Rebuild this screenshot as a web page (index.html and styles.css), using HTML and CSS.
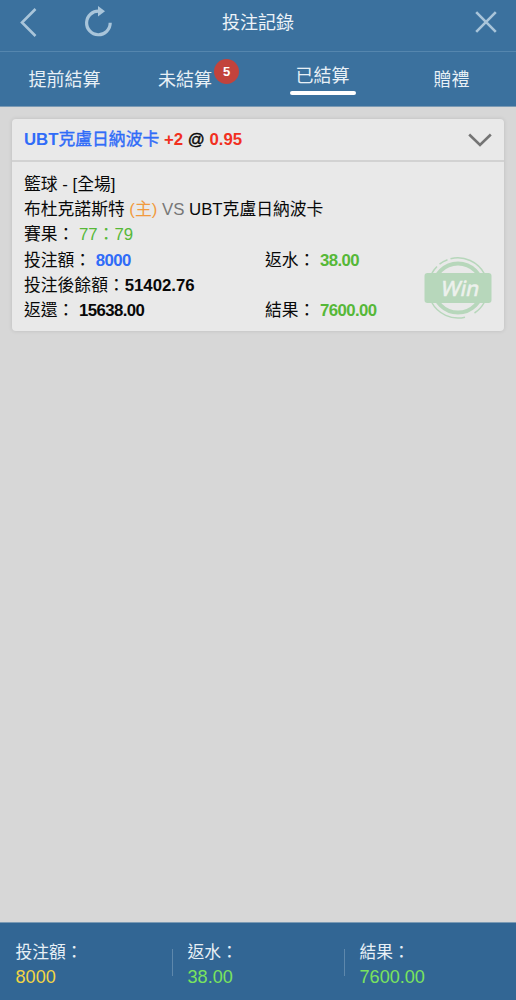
FILE: index.html
```
<!DOCTYPE html>
<html lang="zh-Hant">
<head>
    <meta charset="UTF-8">
    <meta name="viewport" content="width=device-width, initial-scale=1.0">
    <title>投注記錄</title>
    <link rel="stylesheet" href="styles.css">
</head>
<body>
    <header class="header">
        <svg class="icon-back" width="17" height="29" viewBox="0 0 17 29">
            <path d="M15.5 1 L2 14.5 L15.5 28"/>
        </svg>
        <svg class="icon-refresh" width="28" height="31" viewBox="0 0 28 31">
            <path class="ring" d="M15.5 5.2 A11.8 11.8 0 1 0 26.2 16.8"/>
            <path class="arrow" d="M14 0 L21 5.2 L14 10.4 Z"/>
        </svg>
        <h1>投注記錄</h1>
        <svg class="icon-close" width="22" height="22" viewBox="0 0 22 22">
            <path d="M1.2 1.2 L20.8 20.8 M20.8 1.2 L1.2 20.8"/>
        </svg>
    </header>

    <nav class="tabs">
        <a class="tab">提前結算</a>
        <a class="tab"><span class="tab-label">未結算<span class="badge">5</span></span></a>
        <a class="tab active">已結算</a>
        <a class="tab">贈禮</a>
    </nav>

    <main class="list">
        <div class="card">
            <div class="card-title">
                <div><span class="blue">UBT<span class="medium">克盧日納波卡</span></span> <span class="red">+2</span> <span class="medium">@</span> <span class="red">0.95</span></div>
                <svg class="icon-down" width="24" height="14" viewBox="0 0 24 14">
                    <path d="M1.2 1.5 L12 12 L22.8 1.5"/>
                </svg>
            </div>
            <div class="card-body">
                <div class="row">籃球 - [全場]</div>
                <div class="row">布杜克諾斯特 <span class="home">(主)</span> <span class="vs">VS</span> UBT克盧日納波卡</div>
                <div class="row">賽果： <span class="score">77：79</span></div>
                <div class="row cols">
                    <div>投注額： <b class="blue">8000</b></div>
                    <div>返水： <b class="green">38.00</b></div>
                </div>
                <div class="row">投注後餘額：<b class="balance">51402.76</b></div>
                <div class="row cols">
                    <div>返還： <b>15638.00</b></div>
                    <div>結果： <b class="green">7600.00</b></div>
                </div>
            </div>
            <svg class="stamp" width="68" height="64" viewBox="0 0 68 64">
                <circle class="thick" cx="34" cy="32" r="24.5"/>
                <path class="thin" d="M7.5 18 A30 30 0 0 1 13 10.5 M15.5 8.2 A30 30 0 0 1 23.5 3.8 M26.5 2.8 A30 30 0 0 1 60.5 18"/>
                <path class="thin" d="M7.5 46 A30 30 0 0 0 41 61.2 M50.5 57 A30 30 0 0 0 60.5 46"/>
                <rect class="plate" x="0.5" y="17" width="67" height="30" rx="3"/>
                <text transform="translate(35 39.5) skewX(-12)" text-anchor="middle">Win</text>
            </svg>
        </div>
    </main>

    <footer class="summary">
        <div class="sum">
            <div>投注額：</div>
            <div class="yellow">8000</div>
        </div>
        <div class="sum">
            <div>返水：</div>
            <div class="lime">38.00</div>
        </div>
        <div class="sum">
            <div>結果：</div>
            <div class="lime">7600.00</div>
        </div>
    </footer>
</body>
</html>
```
FILE: styles.css
```
* {
    box-sizing: border-box;
}

body {
    margin: 0;
    height: 1000px;
    display: flex;
    flex-direction: column;
    font-family: "Liberation Sans", "Noto Sans CJK TC", sans-serif;
    font-size: 16.8px;
    color: #080808;
    background-color: #d7d7d7;
}

svg {
    display: block;
    fill: none;
}

.header {
    height: 52px;
    display: flex;
    align-items: flex-start;
    background-color: #3b719e;
    border-bottom: 1px solid #5586ae;
}

.header svg {
    stroke: #a9c5da;
    stroke-width: 2.6;
}

.header h1 {
    width: 72px;
    margin: 10px 0 0 110px;
    font-size: 18px;
    font-weight: normal;
    line-height: 26px;
    color: #edf3f8;
    white-space: nowrap;
}

.icon-back {
    margin: 8px 0 0 20px;
}

.icon-refresh {
    margin: 6px 0 0 47px;
}

.header .ring {
    stroke-width: 3.2;
}

.header .arrow {
    fill: #a9c5da;
    stroke: none;
}

.icon-close {
    margin: 11px 0 0 181px;
}

.tabs {
    height: 55px;
    display: flex;
    background-color: #3b719e;
    border-bottom: 1px solid #7b9ab4;
}

.tab {
    width: 129px;
    padding-top: 15px;
    line-height: 26px;
    font-size: 18px;
    text-align: center;
    color: #e8f0f6;
}

.tab:nth-child(2) {
    padding-right: 17px;
}

.tab.active {
    padding-top: 11px;
}

.tab.active::after {
    content: "";
    display: block;
    width: 66px;
    height: 4px;
    margin: 2px auto 0;
    border-radius: 2px;
    background-color: #fff;
}

.tab-label {
    position: relative;
}

.badge {
    position: absolute;
    left: 56px;
    top: -11px;
    width: 25px;
    height: 25px;
    border-radius: 50%;
    font-size: 13px;
    font-weight: bold;
    line-height: 25px;
    color: #fff;
    background-color: #c2433c;
}

.list {
    flex: 1;
    padding: 12px;
}

.card {
    position: relative;
    height: 212px;
    border-radius: 4px;
    background-color: #e9e9e9;
    box-shadow: 0 0 4px rgba(0, 0, 0, 0.12);
}

.card-title {
    height: 43px;
    display: flex;
    align-items: center;
    justify-content: space-between;
    padding: 0 12px;
    font-weight: bold;
    line-height: 25px;
    border-bottom: 2px solid #d2d2d2;
}

.medium {
    font-weight: normal;
    -webkit-text-stroke: 0.4px currentColor;
}

.red {
    color: #f1301f;
}

.icon-down {
    stroke: #747474;
    stroke-width: 2.6;
}

.card-body {
    padding: 10px 12px;
}

.row {
    height: 25.2px;
    line-height: 25.2px;
    white-space: nowrap;
}

.cols {
    display: grid;
    grid-template-columns: 241px 1fr;
}

.row b {
    letter-spacing: -0.6px;
}

.row .balance {
    letter-spacing: 0;
}

.home {
    color: #f19a3e;
}

.vs {
    color: #777;
}

.score,
.green {
    color: #56b838;
}

.blue {
    color: #306cf8;
}

/* Win stamp, lies over the card */
.stamp {
    position: absolute;
    right: 12px;
    top: 137px;
}

.stamp .thick {
    stroke: #b7d7bb;
    stroke-width: 4;
}

.stamp .thin {
    stroke: #b7d7bb;
    stroke-width: 1.5;
}

.stamp .plate {
    fill: #b7d7bb;
}

.stamp text {
    font-family: "Noto Sans", sans-serif;
    font-size: 21px;
    fill: #edf1ed;
    stroke: #edf1ed;
    stroke-width: 0.6;
}

.summary {
    height: 78px;
    display: flex;
    align-items: flex-start;
    padding-top: 17px;
    color: #e8f0f6;
    background-color: #326694;
    border-top: 1px solid #7b9ab4;
}

.sum {
    position: relative;
    width: 172px;
    padding-left: 15.5px;
    line-height: 25px;
}

.sum + .sum::before {
    content: "";
    position: absolute;
    left: 0;
    top: 9px;
    width: 1px;
    height: 27px;
    background-color: #5e88ac;
}

.sum div + div {
    font-size: 18.1px;
}

.yellow {
    color: #f2d544;
}

.lime {
    color: #7ae35e;
}
```
